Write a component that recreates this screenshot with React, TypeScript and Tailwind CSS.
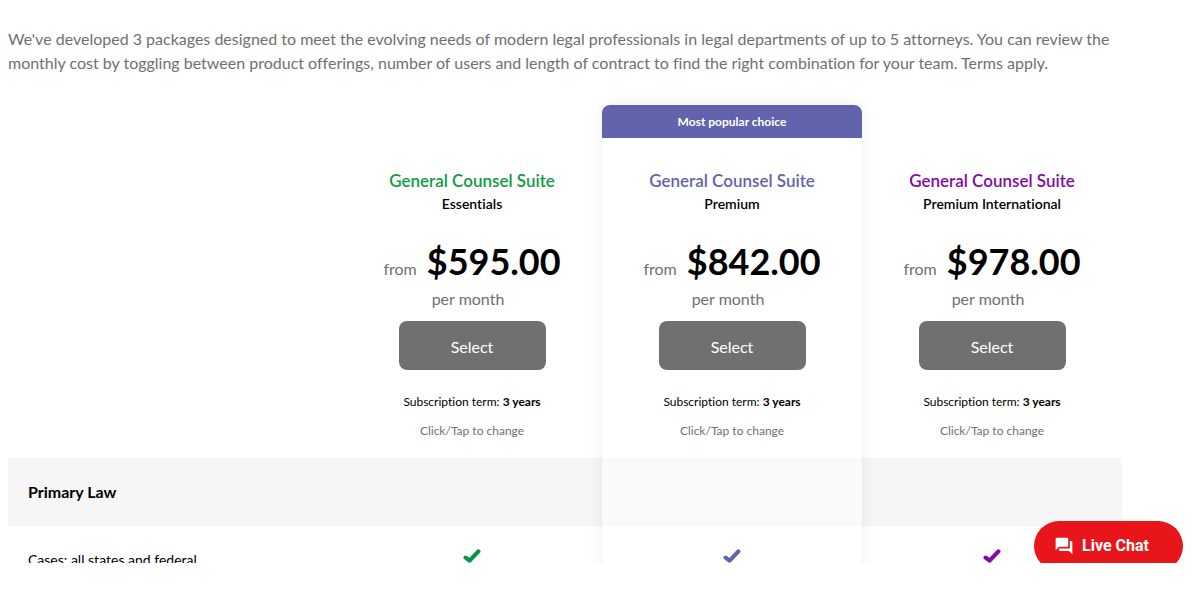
import React from "react";
import { MdForum } from "react-icons/md";

type Plan = {
  tier: string;
  price: string;
  title: string;
  check: string;
  popular?: boolean;
};

const plans: Plan[] = [
  { tier: "Essentials", price: "$595.00", title: "text-[#129a44]", check: "text-[#0b9444]" },
  { tier: "Premium", price: "$842.00", title: "text-[#6263ad]", check: "text-[#6263ad]", popular: true },
  { tier: "Premium International", price: "$978.00", title: "text-[#8209a5]", check: "text-[#8209a5]" },
];

function Check({ className }: { className: string }) {
  return (
    <svg viewBox="0 0 18 16" className={`mx-auto mb-2 h-4 w-[18px] ${className}`} role="img" aria-label="Included">
      <path
        d="M2.6 9.6 6.6 12.6 15.4 3.4"
        fill="none"
        stroke="currentColor"
        strokeWidth="4.2"
        strokeLinecap="round"
        strokeLinejoin="round"
      />
    </svg>
  );
}

function PlanHeader({ plan }: { plan: Plan }) {
  return (
    <th
      scope="col"
      className={
        plan.popular
          ? "relative p-0 align-top font-normal after:pointer-events-none after:absolute after:inset-x-0 after:top-0 after:h-[200vh] after:rounded-t-lg after:shadow-[0_0_16px_rgba(0,0,0,0.07)]"
          : "p-0 align-top font-normal"
      }
    >
      <div className={plan.popular ? "h-[33px] rounded-t-lg bg-[#6263ad] text-xs leading-[34px] font-bold text-white" : "h-[33px]"}>
        {plan.popular && "Most popular choice"}
      </div>
      <div className="flex flex-col items-center pt-[31px] pb-[15px]">
        <div className={`text-[17px] leading-6 font-semibold ${plan.title}`}>General Counsel Suite</div>
        <div className="text-sm leading-[22px] font-semibold text-black">{plan.tier}</div>
        <div className="mt-[18px] flex items-baseline gap-[10px] text-[#707070]">
          <span className="text-base">from</span>
          <span className="text-[36px] leading-14 font-bold text-black">{plan.price}</span>
        </div>
        <div className="pr-2 text-base leading-5 text-[#707070]">per month</div>
        <button type="button" className="mt-3 h-[49px] w-[147px] rounded-lg bg-[#707070] pt-0.5 text-base text-white">
          Select
        </button>
        <div className="mt-5 text-xs leading-6 text-black">
          Subscription term: <b>3 years</b>
        </div>
        <button type="button" className="mt-[5px] text-xs leading-6 text-[#707070]">
          Click/Tap to change
        </button>
      </div>
    </th>
  );
}

export default function App() {
  return (
    <main className="relative h-[calc(100vh-37px)] overflow-hidden bg-white pt-[27px] pr-[78px] pl-2 font-['Lato',sans-serif] [font-variant-ligatures:none]">
      <p className="text-base leading-6 text-[#707070]">
        We've developed 3 packages designed to meet the evolving needs of modern legal professionals in legal departments
        of up to 5 attorneys. You can review the monthly cost by toggling between product offerings, number of users and
        length of contract to find the right combination for your team. Terms apply.
      </p>

      <table className="mt-[30px] w-full table-fixed border-collapse text-center">
        <colgroup>
          <col />
          <col className="w-[260px]" />
          <col className="w-[260px]" />
          <col className="w-[260px]" />
        </colgroup>
        <thead>
          <tr>
            <td />
            {plans.map((plan) => (
              <PlanHeader key={plan.tier} plan={plan} />
            ))}
          </tr>
        </thead>
        <tbody>
          <tr className="h-[68px] bg-[#f6f6f6]">
            <th scope="row" className="px-5 text-left text-base font-bold text-black">
              Primary Law
            </th>
            <td />
            <td className="bg-[#fafafa]" />
            <td />
          </tr>
          <tr className="h-[68px]">
            <th scope="row" className="px-5 text-left text-sm font-normal text-black">
              Cases: all states and federal
            </th>
            {plans.map((plan) => (
              <td key={plan.tier}>
                <Check className={plan.check} />
              </td>
            ))}
          </tr>
        </tbody>
      </table>

      <button
        type="button"
        className="absolute right-[17px] -bottom-2 flex h-[50px] w-[149px] items-center gap-2 rounded-full bg-[#e8151b] pl-5 font-['Roboto',sans-serif] text-base font-bold text-white"
      >
        <MdForum className="size-5" aria-hidden="true" />
        Live Chat
      </button>
    </main>
  );
}
